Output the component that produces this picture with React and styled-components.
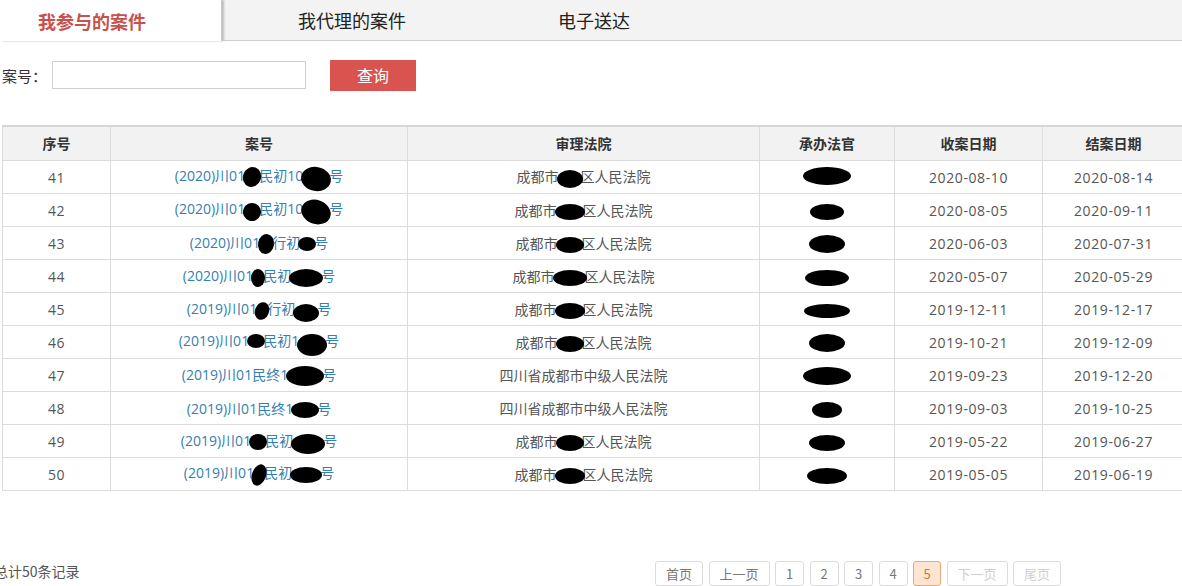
import React from 'react';
import styled, { createGlobalStyle } from 'styled-components';

const GlobalStyle = createGlobalStyle`
  html, body {
    margin: 0;
    padding: 0;
    background: #fff;
    overflow: hidden;
  }
  body {
    font-family: "Open Sans", "Noto Sans CJK SC", sans-serif;
    color: #555;
  }
`;

const Page = styled.div`
  width: 1182px;
  height: 586px;
  overflow: hidden;
`;

const TabBar = styled.div`
  display: flex;
  height: 40px;
  background: #f3f3f3;
  border-bottom: 1px solid #cfcfcf;
`;

const Tab = styled.div`
  width: ${(p) => p.w}px;
  height: ${(p) => (p.active ? 41 : 40)}px;
  box-sizing: border-box;
  padding-left: ${(p) => p.pl}px;
  display: flex;
  align-items: center;
  font-family: "Noto Sans CJK SC", sans-serif;
  font-size: 18px;
  font-weight: ${(p) => (p.active ? 700 : 400)};
  color: ${(p) => (p.active ? '#c8514c' : '#222')};
  background: ${(p) => (p.active ? '#fff' : 'transparent')};
  box-shadow: ${(p) => (p.active ? '2px 0 2px #bdbdbd' : 'none')};
  border-right: ${(p) => (p.active ? '1px solid #c9c9c9' : 'none')};
  position: relative;
  z-index: ${(p) => (p.active ? 1 : 0)};
`;

const SearchRow = styled.div`
  display: flex;
  align-items: center;
  margin-top: 18px;
  padding-left: 2px;
  height: 32px;
  font-family: "Noto Sans CJK SC", sans-serif;
  font-size: 15px;
  color: #333;
`;

const Label = styled.span`
  width: 50px;
`;

const Input = styled.input`
  width: 250px;
  height: 26px;
  border: 1px solid #d0d0d0;
  padding: 0 1px;
  margin: 0;
  outline: none;
`;

const Button = styled.button`
  margin-left: 24px;
  width: 86px;
  height: 31px;
  border: none;
  background: #d9534f;
  color: #fff;
  font-family: inherit;
  font-size: 16px;
  cursor: pointer;
`;

const Table = styled.table`
  margin: 34px 0 0 2px;
  width: 1182px;
  border-collapse: collapse;
  table-layout: fixed;
  font-size: 14px;
`;

const Th = styled.th`
  height: 31px;
  background: #f2f2f2;
  border: 1px solid #dcdcdc;
  border-top: 2px solid #d6d6d6;
  font-family: "Noto Sans CJK SC", sans-serif;
  font-weight: 700;
  color: #333;
  padding: 0 0 2px;
`;

const Td = styled.td`
  height: 32px;
  border: 1px solid #dcdcdc;
  text-align: center;
  color: #555;
  padding: 0;
  white-space: nowrap;
  letter-spacing: ${(p) => (p.wide ? '0.6px' : '0')};
`;

const CaseLink = styled.a`
  color: #3580b0;
  text-decoration: none;
`;

const Blot = styled.span`
  display: inline-block;
  width: ${(p) => p.w}px;
  height: ${(p) => p.h || 17}px;
  background: #000;
  border-radius: 50%;
  vertical-align: middle;
  margin: 0 ${(p) => p.m ?? -2}px;
  transform: translateY(${(p) => p.dy || 0}px) rotate(${(p) => p.r || 0}deg);
  position: relative;
`;

const Footer = styled.div`
  display: flex;
  align-items: flex-start;
  margin-top: 70px;
  height: 26px;
`;

const Total = styled.span`
  margin-left: -6px;
  font-family: "Noto Sans CJK SC", sans-serif;
  font-size: 14px;
  line-height: 20px;
  color: #555;
`;

const Pager = styled.div`
  display: flex;
  gap: 5.5px;
  margin-left: auto;
  margin-right: 121px;
`;

const PageBtn = styled.span`
  display: flex;
  align-items: center;
  justify-content: center;
  width: ${(p) => p.w}px;
  height: 25px;
  box-sizing: border-box;
  border: 1px solid ${(p) => (p.active ? '#e8a878' : '#dcdcdc')};
  border-radius: 3px;
  background: ${(p) => (p.active ? '#fde5d2' : '#fff')};
  color: ${(p) => (p.active ? '#e0762c' : p.disabled ? '#cfcfcf' : '#777')};
  font-family: "Noto Sans CJK SC", sans-serif;
  font-size: 13px;
`;

const headers = [
  ['序号', 108],
  ['案号', 297],
  ['审理法院', 352],
  ['承办法官', 135],
  ['收案日期', 148],
  ['结案日期', 142],
];

const rows = [
  {
    no: 41,
    caseNo: ['(2020)川01', [18, 20, 0, 20], '民初10', [30, 24, 2, 10], '号'],
    court: ['成都市', [26, 18], '区人民法院'],
    judge: [48, 18, -2],
    start: '2020-08-10',
    end: '2020-08-14',
  },
  {
    no: 42,
    caseNo: ['(2020)川01', [18, 18, 2, 20], '民初10', [30, 24, 2, 20], '号'],
    court: ['成都市', [30, 16], '区人民法院'],
    judge: [34, 16, 0],
    start: '2020-08-05',
    end: '2020-09-11',
  },
  {
    no: 43,
    caseNo: ['(2020)川01', [16, 20, 0, 10], '行初', [18, 14, 0, 0], '号'],
    court: ['成都市', [28, 16], '区人民法院'],
    judge: [36, 18, 0],
    start: '2020-06-03',
    end: '2020-07-31',
  },
  {
    no: 44,
    caseNo: ['(2020)川01', [14, 18, 0, 0], '民初', [34, 18, 0, 0], '号'],
    court: ['成都市', [34, 16], '区人民法院'],
    judge: [44, 16, 0],
    start: '2020-05-07',
    end: '2020-05-29',
  },
  {
    no: 45,
    caseNo: ['(2019)川01', [14, 18, 0, 20], '行初', [26, 18, 2, 0], '号'],
    court: ['成都市', [30, 16], '区人民法院'],
    judge: [46, 14, 0],
    start: '2019-12-11',
    end: '2019-12-17',
  },
  {
    no: 46,
    caseNo: ['(2019)川01', [18, 14, -2, 0], '民初1', [30, 22, 2, 0], '号'],
    court: ['成都市', [28, 16], '区人民法院'],
    judge: [36, 18, 0],
    start: '2019-10-21',
    end: '2019-12-09',
  },
  {
    no: 47,
    caseNo: ['(2019)川01民终1', [38, 20, 0, 0], '号'],
    court: ['四川省成都市中级人民法院'],
    judge: [48, 18, 0],
    start: '2019-09-23',
    end: '2019-12-20',
  },
  {
    no: 48,
    caseNo: ['(2019)川01民终1', [28, 16, 0, 0], '号'],
    court: ['四川省成都市中级人民法院'],
    judge: [30, 16, 0],
    start: '2019-09-03',
    end: '2019-10-25',
  },
  {
    no: 49,
    caseNo: ['(2019)川01', [18, 16, 0, 0], '民初', [34, 20, 2, 0], '号'],
    court: ['成都市', [28, 16], '区人民法院'],
    judge: [36, 16, 0],
    start: '2019-05-22',
    end: '2019-06-27',
  },
  {
    no: 50,
    caseNo: ['(2019)川01', [14, 22, 0, 20], '民初', [32, 16, 0, 0], '号'],
    court: ['成都市', [30, 16], '区人民法院'],
    judge: [40, 16, 0],
    start: '2019-05-05',
    end: '2019-06-19',
  },
];

const renderParts = (parts) =>
  parts.map((p, i) =>
    typeof p === 'string' ? (
      <React.Fragment key={i}>{p}</React.Fragment>
    ) : (
      <Blot key={i} w={p[0]} h={p[1]} dy={p[2]} r={p[3]} />
    )
  );

const pages = [
  { label: '首页', w: 48 },
  { label: '上一页', w: 61 },
  { label: '1', w: 29 },
  { label: '2', w: 29 },
  { label: '3', w: 29 },
  { label: '4', w: 29 },
  { label: '5', w: 28, active: true },
  { label: '下一页', w: 61, disabled: true },
  { label: '尾页', w: 48, disabled: true },
];

const App = () => {
  return (
    <Page>
      <GlobalStyle />
      <TabBar>
        <Tab w={222} pl={38} active>
          我参与的案件
        </Tab>
        <Tab w={260} pl={76}>我代理的案件</Tab>
        <Tab w={224} pl={76}>电子送达</Tab>
      </TabBar>

      <SearchRow>
        <Label>案号：</Label>
        <Input type="text" />
        <Button>查询</Button>
      </SearchRow>

      <Table>
        <colgroup>
          {headers.map(([name, w]) => (
            <col key={name} style={{ width: w }} />
          ))}
        </colgroup>
        <thead>
          <tr>
            {headers.map(([name]) => (
              <Th key={name}>{name}</Th>
            ))}
          </tr>
        </thead>
        <tbody>
          {rows.map((row) => (
            <tr key={row.no}>
              <Td wide>{row.no}</Td>
              <Td>
                <CaseLink href="#">{renderParts(row.caseNo)}</CaseLink>
              </Td>
              <Td>{renderParts(row.court)}</Td>
              <Td>
                <Blot w={row.judge[0]} h={row.judge[1]} dy={row.judge[2]} m={0} />
              </Td>
              <Td wide>{row.start}</Td>
              <Td wide>{row.end}</Td>
            </tr>
          ))}
        </tbody>
      </Table>

      <Footer>
        <Total>总计50条记录</Total>
        <Pager>
          {pages.map((p) => (
            <PageBtn key={p.label} w={p.w} active={p.active} disabled={p.disabled}>
              {p.label}
            </PageBtn>
          ))}
        </Pager>
      </Footer>
    </Page>
  );
};

export default App;
